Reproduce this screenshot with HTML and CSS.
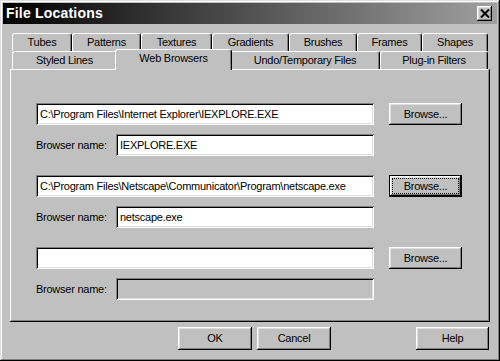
FILE: index.html
```html
<!DOCTYPE html>
<html>
<head>
<meta charset="utf-8">
<link rel="stylesheet" href="styles.css">
</head>
<body>
<div class="window">
  <div class="titlebar">
    <span class="title">File Locations</span>
    <span class="close">
      <svg width="10" height="9" viewBox="0 0 10 9"><path d="M1 0.5 L9 8.5 M9 0.5 L1 8.5" stroke="#000" stroke-width="2" fill="none"/></svg>
    </span>
  </div>
  <div class="body">
    <div class="tabs">
      <div class="tabrow">
        <div class="tab w-tubes">Tubes</div>
        <div class="tab w-patterns">Patterns</div>
        <div class="tab w-textures">Textures</div>
        <div class="tab w-gradients">Gradients</div>
        <div class="tab w-brushes">Brushes</div>
        <div class="tab w-frames">Frames</div>
        <div class="tab w-shapes">Shapes</div>
      </div>
      <div class="tabrow">
        <div class="tab w-styled">Styled Lines</div>
        <div class="tab w-web selected">Web Browsers</div>
        <div class="tab w-undo">Undo/Temporary Files</div>
        <div class="tab w-plugin">Plug-in Filters</div>
      </div>
    </div>
    <div class="panel">
      <div class="group">
        <div class="field path">C:\Program Files\Internet Explorer\IEXPLORE.EXE</div>
        <div class="btn browse">Browse...</div>
        <div class="label">Browser name:</div>
        <div class="field name">IEXPLORE.EXE</div>
      </div>
      <div class="group">
        <div class="field path">C:\Program Files\Netscape\Communicator\Program\netscape.exe</div>
        <div class="btn browse focused"><span class="focus">Browse...</span></div>
        <div class="label">Browser name:</div>
        <div class="field name">netscape.exe</div>
      </div>
      <div class="group">
        <div class="field path"></div>
        <div class="btn browse">Browse...</div>
        <div class="label">Browser name:</div>
        <div class="field name disabled"></div>
      </div>
    </div>
    <div class="footer">
      <div class="btn">OK</div>
      <div class="btn cancel">Cancel</div>
      <div class="btn">Help</div>
    </div>
  </div>
</div>
</body>
</html>
```

FILE: styles.css
```css
* { box-sizing: border-box; }
html, body { margin: 0; padding: 0; background: #c0c0c0; }
body {
  font-family: "Liberation Sans", Arial, sans-serif;
  font-size: 11px;
  letter-spacing: -0.25px;
  color: #000;
}
.window {
  width: 500px;
  height: 361px;
  padding: 3px;
  background: #c0c0c0;
  box-shadow: inset -1px -1px #000, inset 1px 1px #dfdfdf, inset -2px -2px #808080, inset 2px 2px #fff;
  display: flex;
  flex-direction: column;
}
.titlebar {
  height: 21px;
  flex: none;
  display: flex;
  align-items: center;
  padding: 0 5px 0 3px;
  background: linear-gradient(to right, #000 0%, #3a3a3a 35%, #a0a0a0 100%);
}
.title {
  flex: 1;
  color: #fff;
  font-weight: bold;
  font-size: 14px;
  letter-spacing: 0.2px;
  line-height: 21px;
}
.close {
  width: 15px;
  height: 15px;
  background: #c0c0c0;
  box-shadow: inset -1px -1px #000, inset 1px 1px #fff, inset -2px -2px #808080, inset 2px 2px #dfdfdf;
  display: flex;
  align-items: center;
  justify-content: center;
  padding-bottom: 1px;
}
.close svg { display: block; }
.body {
  flex: 1;
  padding: 9px 7px 0 7px;
  display: flex;
  flex-direction: column;
}
.tabs {
  margin: 0 2px;
  display: flex;
  flex-direction: column;
}
.tabrow {
  display: flex;
  height: 18px;
}
.tab {
  height: 18px;
  flex: none;
  border-top: 1px solid #fff;
  border-left: 1px solid #fff;
  border-right: 1px solid #000;
  border-radius: 3px 3px 0 0;
  box-shadow: inset -1px 0 #808080;
  text-align: center;
  line-height: 17px;
  background: #c0c0c0;
}
.w-tubes { width: 60px; }
.w-patterns { width: 69px; }
.w-textures { width: 71px; }
.w-gradients { width: 77px; }
.w-brushes { width: 68px; }
.w-frames { width: 65px; }
.w-shapes { width: 66px; }
.w-styled { width: 105px; }
.w-web { width: 113px; }
.w-undo { width: 150px; }
.w-plugin { width: 108px; }
.tab.selected {
  position: relative;
  z-index: 2;
  width: 117px;
  height: 21px;
  margin: -2px -2px -1px -2px;
  line-height: 17px;
}
.panel {
  height: 253px;
  flex: none;
  padding: 34px 0 0 26px;
  box-shadow: inset -1px -1px #000, inset 1px 1px #fff, inset -2px -2px #808080;
  display: flex;
  flex-direction: column;
  gap: 19px;
}
.group {
  display: grid;
  grid-template-columns: 80px 258px 15px 73px;
  grid-template-rows: 22px 22px;
  row-gap: 9px;
}
.field {
  height: 22px;
  background: #fff;
  padding: 0 4px;
  line-height: 22px;
  white-space: nowrap;
  overflow: hidden;
  box-shadow: inset 1px 1px #808080, inset -1px -1px #fff, inset 2px 2px #000, inset -2px -2px #dfdfdf;
}
.field.path { grid-column: 1 / 3; grid-row: 1; }
.field.name { grid-column: 2; grid-row: 2; }
.field.disabled { background: #c0c0c0; }
.label { grid-column: 1; grid-row: 2; align-self: center; }
.btn {
  width: 74px;
  height: 23px;
  background: #c0c0c0;
  text-align: center;
  line-height: 23px;
  box-shadow: inset -1px -1px #000, inset 1px 1px #fff, inset -2px -2px #808080, inset 2px 2px #dfdfdf;
}
.btn.browse {
  grid-column: 4;
  grid-row: 1;
  width: 73px;
  height: 22px;
  line-height: 22px;
}
.btn.focused {
  border: 1px solid #000;
  line-height: 20px;
  padding: 2px;
  display: flex;
}
.btn.focused .focus {
  flex: 1;
  border: 1px dotted #000;
  line-height: 14px;
}
.footer {
  margin-top: 5px;
  display: flex;
  justify-content: flex-end;
  gap: 5px;
  padding-right: 1px;
}
.btn.cancel { margin-right: 80px; }
.footer .btn:last-child { width: 73px; }
```
